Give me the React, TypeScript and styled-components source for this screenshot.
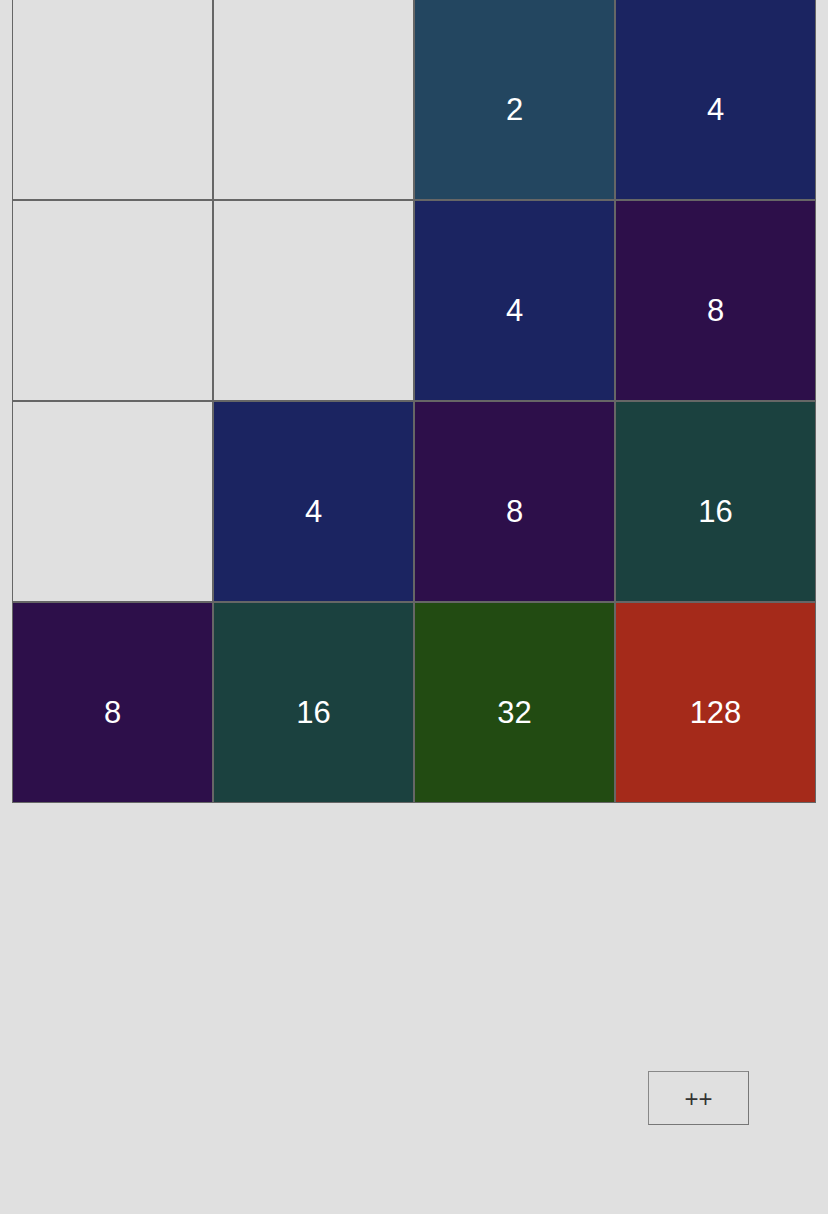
import styled, { createGlobalStyle } from "styled-components";

const GlobalStyle = createGlobalStyle`
  body {
    margin: 0;
    background: #e0e0e0;
    font-family: "Liberation Sans", Arial, sans-serif;
  }
`;

const Page = styled.div`
  padding: 0 12px;
  min-height: 1214px;
  box-sizing: border-box;
`;

const Board = styled.div`
  display: grid;
  grid-template-columns: repeat(4, 201px);
  grid-auto-rows: 201px;
  margin-top: -1px;
`;

const tileColors: Record<number, string> = {
  0: "#e0e0e0",
  2: "#234660",
  4: "#1b2461",
  8: "#2d0f4a",
  16: "#1b413f",
  32: "#224b12",
  128: "#a52a1a",
};

const Tile = styled.div<{ $value: number }>`
  box-sizing: border-box;
  border: 1px solid #666;
  background: ${(p) => tileColors[p.$value] ?? "#000"};
  color: #fff;
  font-size: 31px;
  display: flex;
  align-items: center;
  justify-content: center;
  padding-top: 20px;
`;

const Footer = styled.div`
  display: flex;
  justify-content: flex-end;
  padding: 268px 67px 0 0;
`;

const AddButton = styled.button`
  width: 101px;
  height: 54px;
  background: #e0e0e0;
  border: 1px solid #888;
  border-right-color: #777;
  border-bottom-color: #777;
  font-family: "Liberation Sans", Arial, sans-serif;
  font-size: 24px;
  line-height: 1;
  color: #333;
  padding: 2px 0 0;
`;

const board = [
  [0, 0, 2, 4],
  [0, 0, 4, 8],
  [0, 4, 8, 16],
  [8, 16, 32, 128],
];

const App = () => {
  return (
    <Page>
      <GlobalStyle />
      <Board>
        {board.flat().map((value, i) => (
          <Tile key={i} $value={value}>
            {value > 0 ? value : ""}
          </Tile>
        ))}
      </Board>
      <Footer>
        <AddButton>++</AddButton>
      </Footer>
    </Page>
  );
};

export default App;
